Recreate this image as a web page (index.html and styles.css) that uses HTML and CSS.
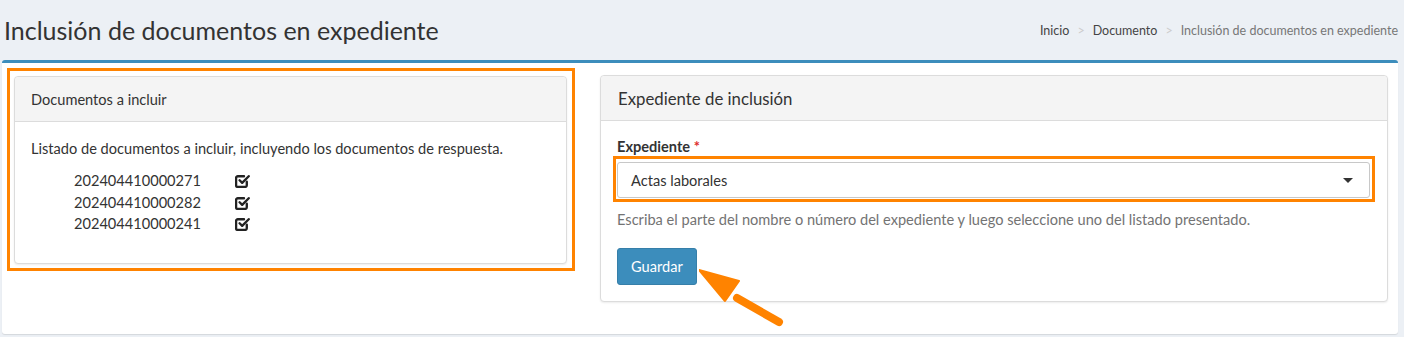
FILE: index.html
```html
<!DOCTYPE html>
<html lang="es">
<head>
    <meta charset="UTF-8">
    <meta name="viewport" content="width=device-width, initial-scale=1.0">
    <title>Inclusión de documentos en expediente</title>
    <link rel="stylesheet" href="styles.css">
</head>
<body>
    <section class="content-header">
        <h1>Inclusión de documentos en expediente</h1>
        <ol class="breadcrumb">
            <li><a href="#">Inicio</a></li>
            <li><a href="#" class="strong">Documento</a></li>
            <li class="active">Inclusión de documentos en expediente</li>
        </ol>
    </section>

    <section class="box">
        <div class="panel panel-docs">
            <div class="panel-heading">Documentos a incluir</div>
            <div class="panel-body">
                <p class="intro">Listado de documentos a incluir, incluyendo los documentos de respuesta.</p>
                <ul class="doc-list">
                    <li><span class="num">202404410000271</span><svg class="check" viewBox="0 0 14 14"><path d="M11 8.2v3.2a1.6 1.6 0 0 1-1.6 1.6H2.6A1.6 1.6 0 0 1 1 11.4V4.6A1.6 1.6 0 0 1 2.6 3H8.4"/><path d="M4.3 6.8l2.4 2.4L12.8 3"/></svg></li>
                    <li><span class="num">202404410000282</span><svg class="check" viewBox="0 0 14 14"><path d="M11 8.2v3.2a1.6 1.6 0 0 1-1.6 1.6H2.6A1.6 1.6 0 0 1 1 11.4V4.6A1.6 1.6 0 0 1 2.6 3H8.4"/><path d="M4.3 6.8l2.4 2.4L12.8 3"/></svg></li>
                    <li><span class="num">202404410000241</span><svg class="check" viewBox="0 0 14 14"><path d="M11 8.2v3.2a1.6 1.6 0 0 1-1.6 1.6H2.6A1.6 1.6 0 0 1 1 11.4V4.6A1.6 1.6 0 0 1 2.6 3H8.4"/><path d="M4.3 6.8l2.4 2.4L12.8 3"/></svg></li>
                </ul>
            </div>
        </div>

        <div class="panel panel-form">
            <div class="panel-heading big">Expediente de inclusión</div>
            <div class="panel-body">
                <label class="field-label">Expediente <span class="req">*</span></label>
                <div class="select">
                    <span>Actas laborales</span>
                    <span class="caret"></span>
                </div>
                <p class="help">Escriba el parte del nombre o número del expediente y luego seleccione uno del listado presentado.</p>
                <button class="btn">Guardar</button>
            </div>
        </div>

        <svg class="arrow" viewBox="0 0 100 70" width="100" height="70">
            <path d="M38 33 L80 57" stroke="#ff8300" stroke-width="8" stroke-linecap="round"/>
            <polygon points="0,5 40,16 26,36" fill="#ff8300" stroke="#ff8300" stroke-width="2" stroke-linejoin="round"/>
        </svg>
    </section>
</body>
</html>
```

FILE: styles.css
```css
body {
    margin: 0;
    background: #ecf0f5;
    font-family: 'Lato', 'Liberation Sans', sans-serif;
    font-size: 14.6px;
    color: #333;
    height: 337px;
    overflow: hidden;
}

.content-header {
    display: flex;
    justify-content: space-between;
    align-items: center;
    height: 60px;
    padding: 0 6px 0 4px;
}

.content-header h1 {
    margin: 0;
    font-size: 25px;
    font-weight: 400;
    color: #333;
}

.breadcrumb {
    display: flex;
    list-style: none;
    margin: 0;
    padding: 0;
    font-size: 12.5px;
}

.breadcrumb li + li::before {
    content: '>';
    color: #ccc;
    padding: 0 8px;
}

.breadcrumb a {
    color: #444;
    text-decoration: none;
}

.breadcrumb .active {
    color: #777;
}

.box {
    position: relative;
    margin: 0 6px 0 2px;
    height: 274px;
    background: #fff;
    border-top: 3px solid #3c8dbc;
    border-radius: 3px;
    box-shadow: 0 1px 1px rgba(0, 0, 0, 0.1);
    display: grid;
    grid-template-columns: 553px 788px;
    column-gap: 33px;
    align-items: start;
    padding: 12px 10px 0 12px;
    box-sizing: border-box;
}

.panel {
    position: relative;
    border: 1px solid #dcdcdc;
    border-radius: 4px;
    box-shadow: 0 1px 2px rgba(0, 0, 0, 0.08);
    background: #fff;
}

/* orange highlight frames drawn over the screenshot */
.panel-docs::after {
    content: '';
    position: absolute;
    top: -9px;
    left: -8px;
    right: -9px;
    bottom: -8px;
    border: 3px solid #ff8300;
}

.panel-docs {
    margin-top: 1px;
}

.panel-heading {
    height: 44px;
    display: flex;
    align-items: center;
    padding: 0 16px;
    background: #f4f4f4;
    border-bottom: 1px solid #dcdcdc;
    border-radius: 4px 4px 0 0;
}

.panel-heading.big {
    font-size: 16.8px;
    padding: 0 17px;
}

.panel-docs .panel-body {
    padding: 18px 16px 28px;
}

.intro {
    margin: 0 0 13px;
}

.doc-list {
    list-style: none;
    margin: 0;
    padding: 0 0 0 43px;
}

.doc-list li {
    display: flex;
    align-items: center;
    height: 21.5px;
}

.num {
    width: 161px;
}

.check {
    width: 15px;
    height: 15px;
    fill: none;
    stroke: #222;
    stroke-width: 2.2;
    stroke-linecap: round;
    stroke-linejoin: round;
}

.panel-form .panel-body {
    padding: 17px 17px 16px 16px;
}

.field-label {
    display: block;
    font-weight: 700;
    margin-bottom: 7px;
}

.req {
    color: #dd2c2c;
}

.select {
    position: relative;
    display: flex;
    justify-content: space-between;
    align-items: center;
    height: 36px;
    padding: 0 16px 0 13px;
    border: 1px solid #c8c8c8;
    border-radius: 3px;
    box-sizing: border-box;
}

.select::after {
    content: '';
    position: absolute;
    top: -7px;
    left: -5px;
    right: -6px;
    bottom: -5px;
    border: 3px solid #ff8300;
}

.caret {
    width: 0;
    height: 0;
    border-left: 5px solid transparent;
    border-right: 5px solid transparent;
    border-top: 5px solid #333;
}

.help {
    margin: 13px 0 20px;
    color: #737373;
}

.btn {
    display: block;
    height: 37px;
    padding: 0 13px;
    background: #3c8dbc;
    color: #fff;
    border: 1px solid #367fa9;
    border-radius: 3px;
    font-family: inherit;
    font-size: 14.6px;
}

.arrow {
    position: absolute;
    left: 697px;
    top: 202px;
}
```
